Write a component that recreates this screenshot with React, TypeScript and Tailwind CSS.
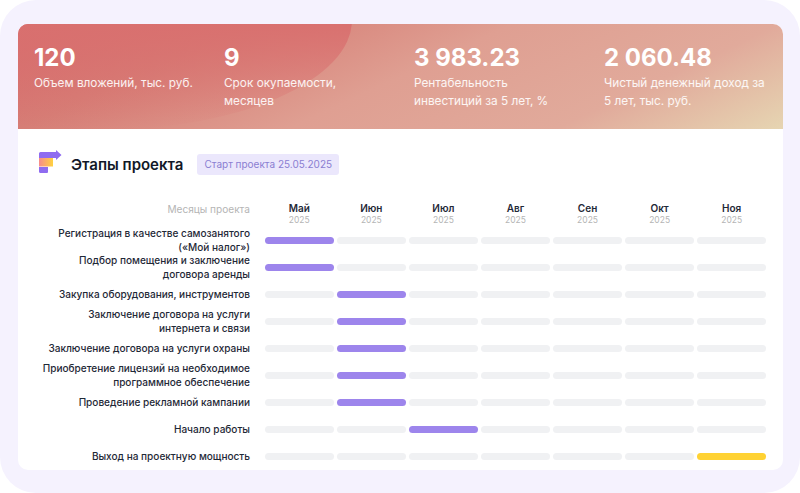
const months = ["Май","Июн","Июл","Авг","Сен","Окт","Ноя"];
const rows: { label: string[]; on: number; yellow?: boolean }[] = [
  { label: ["Регистрация в качестве самозанятого", "(«Мой налог»)"], on: 0 },
  { label: ["Подбор помещения и заключение", "договора аренды"], on: 0 },
  { label: ["Закупка оборудования, инструментов"], on: 1 },
  { label: ["Заключение договора на услуги", "интернета и связи"], on: 1 },
  { label: ["Заключение договора на услуги охраны"], on: 1 },
  { label: ["Приобретение лицензий на необходимое", "программное обеспечение"], on: 1 },
  { label: ["Проведение рекламной кампании"], on: 1 },
  { label: ["Начало работы"], on: 2 },
  { label: ["Выход на проектную мощность"], on: 6, yellow: true },
];
const stats = [
  ["120", "Объем вложений, тыс. руб."],
  ["9", "Срок окупаемости, месяцев"],
  ["3 983.23", "Рентабельность инвестиций за 5 лет, %"],
  ["2 060.48", "Чистый денежный доход за 5 лет, тыс. руб."],
];

export default function App() {
  return (
    <div className="w-[800px] h-[493px] bg-white overflow-hidden" style={{ fontFamily: "Inter, 'Noto Sans', sans-serif" }}>
      <div className="w-full h-full bg-[#f5f2fe] rounded-[36px] pt-[24px] pl-[18px] pr-[17px] pb-[23px]">
        <div className="h-full bg-white rounded-[10px] overflow-hidden">
          <div className="relative h-[105px] overflow-hidden bg-[linear-gradient(155deg,#d56a6a_0%,#d67e76_23%,#df9f92_50%,#e1aa9b_77%,#e6d5b2_100%)]">
            <div className="absolute left-[-170px] top-[-114px] w-[504px] h-[220px] rounded-[50%] bg-gradient-to-b from-[#d9706f] from-50% to-[#d9706f]/0" />
            <div className="relative flex pl-[16px] pt-[19px]">
              {stats.map(([v, l]) => (
                <div key={v} className="w-[190px] shrink-0 pr-[27px] text-white">
                  <div className="text-[24px] leading-[29px] font-bold">{v}</div>
                  <div className="mt-[2px] text-[11.8px] leading-[18px] text-white/90">{l}</div>
                </div>
              ))}
            </div>
          </div>
          <div className="flex items-start pl-[20px] pt-[21px]">
            <svg width="24" height="24" viewBox="0 0 24 24" className="shrink-0">
              <defs>
                <linearGradient id="g" x1="0" x2="1" y1="0" y2="0">
                  <stop offset="0" stopColor="#f78c8c" />
                  <stop offset="1" stopColor="#ffd23f" />
                </linearGradient>
              </defs>
              <path d="M1 3.500a1.500 1.500 0 0 1 1.500-1.500H18V0l5.500 5-5.500 5V8H1z" fill="#8f6cf0" />
              <rect x="1" y="8" width="14" height="8.500" fill="url(#g)" />
              <path d="M1 17h9v5a1 1 0 0 1-1 1H2.500A1.500 1.500 0 0 1 1 21.500z" fill="#8f6cf0" />
            </svg>
            <div className="ml-[9px] mt-[5px] text-[15px] leading-[20px] font-semibold text-[#111827]">Этапы проекта</div>
            <div className="ml-[14px] mt-[4px] h-[21px] px-[7px] flex items-center rounded-[3px] bg-[#ebe7fc] text-[10px] text-[#8a7ed2]">Старт проекта 25.05.2025</div>
          </div>
          <div className="mt-[26px] pr-[17px]">
            <div className="flex h-[26px]">
              <div className="w-[232px] text-right text-[10.1px] leading-[14px] text-[#b5b5b5] pt-[1px]">Месяцы проекта</div>
              <div className="ml-[15px] flex-1 grid grid-cols-7 gap-x-[3.500px]">
                {months.map((m) => (
                  <div key={m} className="text-center">
                    <div className="text-[10px] leading-[14px] font-semibold text-[#1f2937]">{m}</div>
                    <div className="text-[8.500px] leading-[11px] text-[#b5b5b5]">2025</div>
                  </div>
                ))}
              </div>
            </div>
            {rows.map((r, i) => (
              <div key={i} className="flex items-center h-[27px]">
                <div className="w-[232px] text-right text-[10.05px] leading-[13.500px] font-medium text-[#1f2937]">
                  {r.label.map((t) => <div key={t}>{t}</div>)}
                </div>
                <div className="ml-[15px] flex-1 grid grid-cols-7 gap-x-[3.500px]">
                  {months.map((m, c) => (
                    <div key={m} className={`h-[7px] rounded-full ${c === r.on ? (r.yellow ? "bg-[#ffd233]" : "bg-[#9d85ec]") : "bg-[#f0f1f3]"}`} />
                  ))}
                </div>
              </div>
            ))}
          </div>
        </div>
      </div>
    </div>
  );
}
